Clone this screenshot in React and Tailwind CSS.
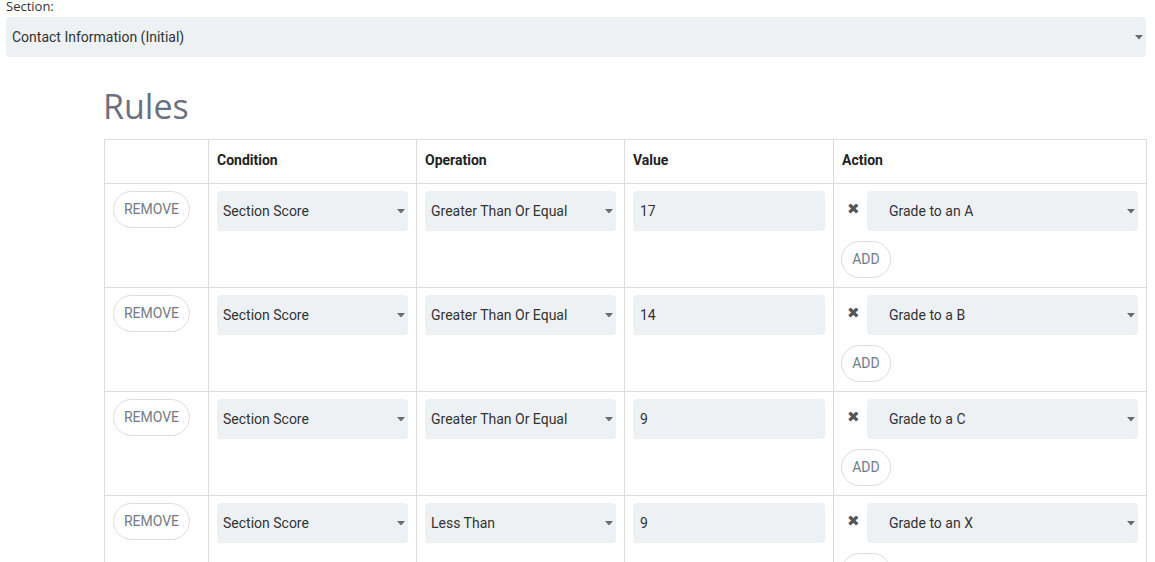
import React from "react";

const rules = [
  { op: "Greater Than Or Equal", value: "17", action: "Grade to an A" },
  { op: "Greater Than Or Equal", value: "14", action: "Grade to a B" },
  { op: "Greater Than Or Equal", value: "9", action: "Grade to a C" },
  { op: "Less Than", value: "9", action: "Grade to an X" },
];

function Caret() {
  return (
    <svg width="8" height="5" viewBox="0 0 8 5" className="shrink-0">
      <path d="M0 0 L8 0 L4 4.5 Z" fill="#6b6b6b" />
    </svg>
  );
}

function FakeSelect({ children, className = "", textPad = "pl-[6px]" }) {
  return (
    <div
      className={`h-[40px] bg-[#eef1f4] rounded-[4px] flex items-center justify-between pr-[3px] text-[14px] text-[#333] ${textPad} ${className}`}
    >
      <span>{children}</span>
      <Caret />
    </div>
  );
}

function PillButton({ children, className = "" }) {
  return (
    <div
      className={`h-[37px] rounded-full border border-[#dcdcdc] bg-white flex items-center justify-center text-[14px] text-[#757b86] ${className}`}
    >
      {children}
    </div>
  );
}

export default function App() {
  return (
    <div
      className="bg-white w-[1155px] h-[562px] overflow-hidden"
      style={{ fontFamily: "Roboto, 'Liberation Sans', sans-serif" }}
    >
      <div className="pl-[6px] pr-[9px]">
        <div
          className="h-[17px] leading-[12px] text-[13px] text-[#333]"
          style={{ fontFamily: "'Open Sans', 'Noto Sans', sans-serif" }}
        >
          Section:
        </div>
        <FakeSelect className="pl-[6px]">Contact Information (Initial)</FakeSelect>
      </div>

      <div className="ml-[104px] mt-[30px]">
        <h1
          className="text-[34px] leading-[38px] text-[#6b7080] mb-[14px] -ml-[1px]"
          style={{ fontFamily: "'Open Sans', 'Noto Sans', sans-serif" }}
        >
          Rules
        </h1>

        <table className="border-collapse w-[1042px] table-fixed">
          <colgroup>
            <col className="w-[104px]" />
            <col className="w-[208px]" />
            <col className="w-[208px]" />
            <col className="w-[209px]" />
            <col className="w-[313px]" />
          </colgroup>
          <thead>
            <tr className="h-[44px]">
              <th className="border border-[#dcdcdc]"></th>
              {["Condition", "Operation", "Value", "Action"].map((h) => (
                <th
                  key={h}
                  className="border border-[#dcdcdc] text-left pl-[8px] pb-[2px] text-[14px] font-bold text-[#222]"
                >
                  {h}
                </th>
              ))}
            </tr>
          </thead>
          <tbody>
            {rules.map((r, i) => (
              <tr key={i} className="h-[104px] align-top">
                <td className="border border-[#dcdcdc] pt-[7px] pl-[8px]">
                  <PillButton className="w-[77px]">REMOVE</PillButton>
                </td>
                <td className="border border-[#dcdcdc] pt-[7px] px-[8px]">
                  <FakeSelect>Section Score</FakeSelect>
                </td>
                <td className="border border-[#dcdcdc] pt-[7px] px-[8px]">
                  <FakeSelect>{r.op}</FakeSelect>
                </td>
                <td className="border border-[#dcdcdc] pt-[7px] px-[8px]">
                  <div className="h-[40px] bg-[#eef1f4] rounded-[4px] flex items-center pl-[7px] text-[14px] text-[#333]">
                    {r.value}
                  </div>
                </td>
                <td className="border border-[#dcdcdc] pt-[7px] pl-[7px] pr-[8px]">
                  <div className="flex items-center">
                    <span className="w-[26px] text-[15px] text-[#555] pl-[6px] pb-[3px] leading-none">✖</span>
                    <FakeSelect className="flex-1" textPad="pl-[22px]">
                      {r.action}
                    </FakeSelect>
                  </div>
                  <PillButton className="w-[50px] h-[36px] mt-[10px]">ADD</PillButton>
                </td>
              </tr>
            ))}
          </tbody>
        </table>
      </div>
    </div>
  );
}
